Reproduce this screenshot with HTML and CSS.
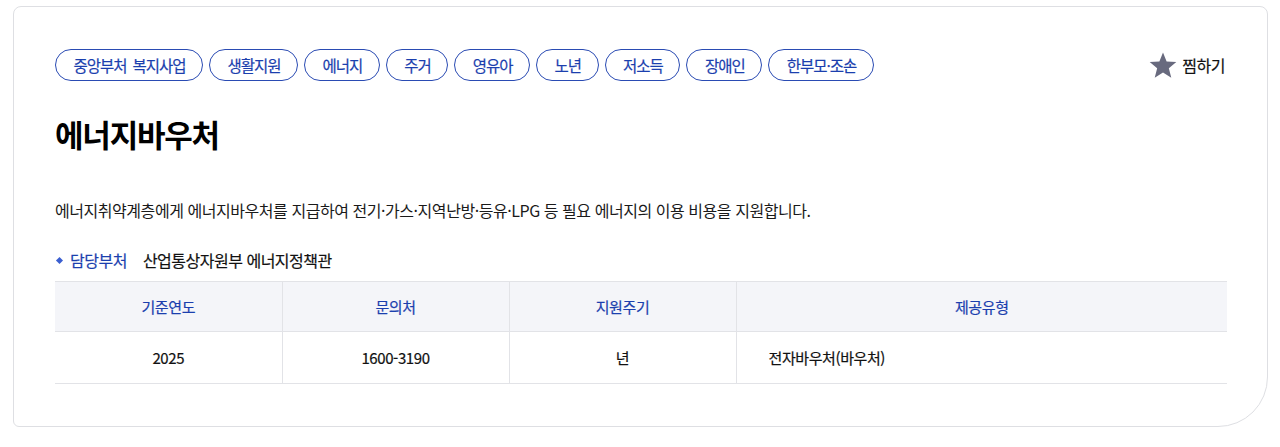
FILE: index.html
```html
<!DOCTYPE html>
<html lang="ko">
<head>
<meta charset="utf-8">
<link rel="stylesheet" href="styles.css">
</head>
<body>
<div class="page">
  <div class="card">
    <div class="top">
      <ul class="tags">
        <li class="tag">중앙부처 복지사업</li>
        <li class="tag">생활지원</li>
        <li class="tag">에너지</li>
        <li class="tag">주거</li>
        <li class="tag">영유아</li>
        <li class="tag">노년</li>
        <li class="tag">저소득</li>
        <li class="tag">장애인</li>
        <li class="tag">한부모·조손</li>
      </ul>
      <button class="fav" type="button">
        <svg class="star" viewBox="0 0 24 24" width="28" height="28"><path d="M12 1.2l3.1 7.7 8.3.6-6.4 5.3 2.1 8.1L12 18.4l-7.1 4.5 2.1-8.1L.6 9.5l8.3-.6z" fill="#686a7e"/></svg>
        <span>찜하기</span>
      </button>
    </div>
    <h1 class="title">에너지바우처</h1>
    <p class="desc">에너지취약계층에게 에너지바우처를 지급하여 전기·가스·지역난방·등유·LPG 등 필요 에너지의 이용 비용을 지원합니다.</p>
    <div class="dept">
      <span class="dept-label">담당부처</span>
      <span class="dept-value">산업통상자원부 에너지정책관</span>
    </div>
    <table class="info">
      <thead>
        <tr><th class="c1">기준연도</th><th class="c2">문의처</th><th class="c3">지원주기</th><th class="c4">제공유형</th></tr>
      </thead>
      <tbody>
        <tr><td>2025</td><td>1600-3190</td><td>년</td><td class="left">전자바우처(바우처)</td></tr>
      </tbody>
    </table>
  </div>
</div>
</body>
</html>
```

FILE: styles.css
```css
* { box-sizing: border-box; }
html, body { margin: 0; padding: 0; background: #fff; }
body {
  font-family: "Noto Sans CJK KR", "Noto Sans", sans-serif;
  color: #111;
}
.page {
  padding: 6px 12px 20px 13px;
}
.card {
  border: 1px solid #dedfe3;
  border-radius: 8px 8px 50px 6px;
  padding: 42px 40px 41px 41px;
  height: 421px;
}
.top {
  display: flex;
  justify-content: space-between;
  align-items: center;
}
.tags {
  display: flex;
  gap: 6px;
  list-style: none;
  margin: 0;
  padding: 0;
}
.tag {
  height: 32px;
  line-height: 30px;
  padding: 0 16.5px 0 17.5px;
  border: 1px solid #2a4bb3;
  border-radius: 16px;
  color: #1b3fae;
  font-size: 15.5px;
  font-weight: 400;
  letter-spacing: -1px;
  word-spacing: 2.5px;
  -webkit-text-stroke: 0.2px #1b3fae;
}
.fav {
  display: flex;
  align-items: center;
  gap: 5px;
  background: none;
  border: 0;
  padding: 0;
  margin-right: 2px;
  font-family: inherit;
  font-size: 16px;
  font-weight: 400;
  color: #111;
  letter-spacing: -0.5px;
  -webkit-text-stroke: 0.2px #111;
}
.title {
  margin: 33px 0 0;
  font-size: 31px;
  line-height: 40px;
  font-weight: 700;
  letter-spacing: -1.2px;
  color: #000;
}
.desc {
  margin: 44px 0 0;
  font-size: 16px;
  line-height: 24px;
  letter-spacing: -0.45px;
  color: #1a1a1a;
}
.dept {
  margin-top: 26px;
  display: flex;
  align-items: center;
  font-size: 16px;
  font-weight: 400;
  line-height: 24px;
  letter-spacing: -0.5px;
  -webkit-text-stroke: 0.2px currentColor;
}
.dept-label {
  position: relative;
  padding-left: 15px;
  color: #1b3fae;
  margin-right: 16px;
}
.dept-label::before {
  content: "";
  position: absolute;
  left: 2px;
  top: 10px;
  width: 5px;
  height: 5px;
  background: #3b5fd0;
  transform: rotate(45deg);
}
.dept-value { color: #111; }
.info {
  margin-top: 9px;
  width: 100%;
  border-collapse: collapse;
  font-size: 15px;
  font-weight: 400;
  letter-spacing: -0.4px;
  border-top: 1px solid #e2e3e7;
  border-bottom: 1px solid #e2e3e7;
}
.info th {
  height: 50px;
  background: #f4f5f9;
  color: #1b3fae;
  font-weight: 400;
  border-bottom: 1px solid #e2e3e7;
  -webkit-text-stroke: 0.2px #1b3fae;
}
.info td {
  height: 52px;
  text-align: center;
  color: #111;
  -webkit-text-stroke: 0.2px #111;
}
.info th + th, .info td + td { border-left: 1px solid #e2e3e7; }
.info .c1, .info .c2, .info .c3 { width: 227px; }
.info td.left { text-align: left; padding-left: 32px; }
```
